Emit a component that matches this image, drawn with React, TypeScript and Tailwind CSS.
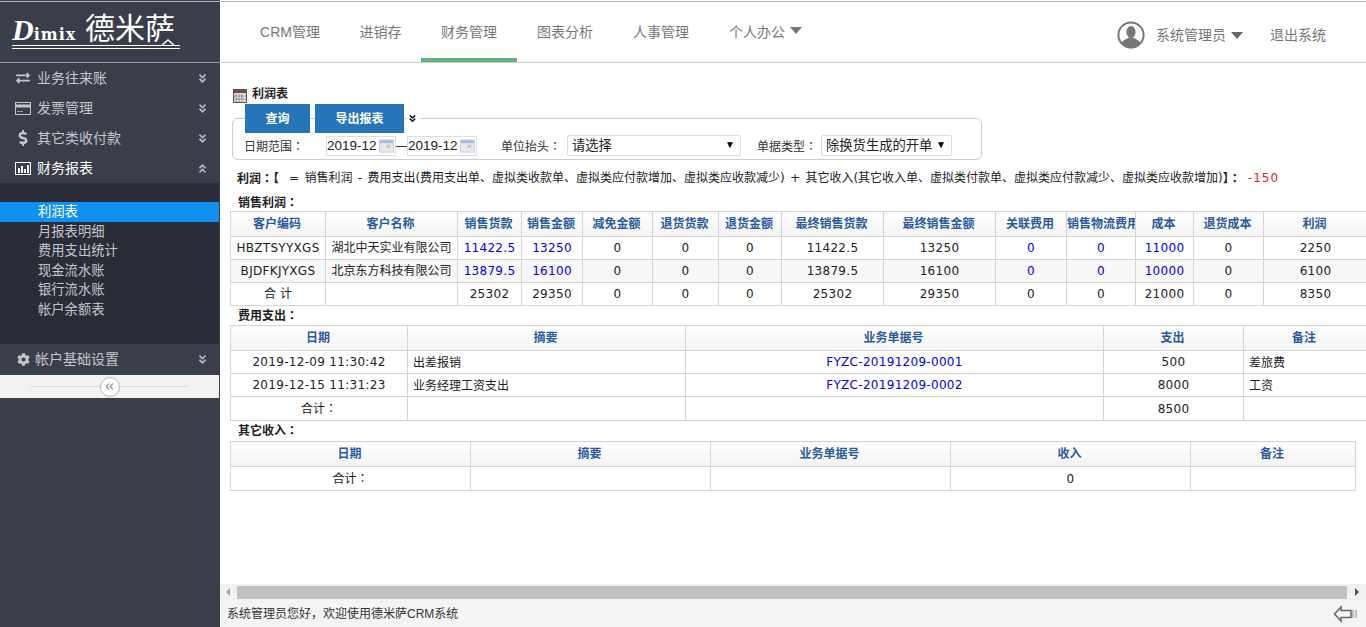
import { ChevronsDown, ChevronsLeft } from 'lucide-react';
import { FaAngleDoubleDown, FaAngleDoubleUp, FaCog, FaDollarSign, FaExchangeAlt } from 'react-icons/fa';

const font = 'font-["Liberation_Sans","Noto_Sans_CJK_SC",sans-serif]';
const dejavu = 'font-["DejaVu_Sans","Noto_Sans_CJK_SC",sans-serif]';

const tabs = [
  { label: 'CRM管理', w: 'w-[100px]' },
  { label: '进销存', w: 'w-[81px]' },
  { label: '财务管理', w: 'w-[96px]', active: true },
  { label: '图表分析', w: 'w-[96px]' },
  { label: '人事管理', w: 'w-[96px]' },
];

const subMenu = ['利润表', '月报表明细', '费用支出统计', '现金流水账', '银行流水账', '帐户余额表'];

// the reference centres its full-width colon in the cell, the SC face does not
function Colon() {
  return <span className="font-['Noto_Sans_CJK_TC',sans-serif]">：</span>;
}

function Chart() {
  return (
    <svg width="16" height="13" viewBox="0 0 16 13" className="shrink-0">
      <rect x="0.5" y="0.5" width="15" height="12" fill="none" stroke="#fff" />
      <rect x="3" y="6" width="2" height="5" fill="#fff" />
      <rect x="6" y="4" width="2" height="7" fill="#fff" />
      <rect x="9" y="7" width="2" height="4" fill="#fff" />
      <rect x="12" y="3" width="2" height="8" fill="#fff" />
    </svg>
  );
}

function Card() {
  return (
    <svg width="16" height="13" viewBox="0 0 16 13" className="shrink-0">
      <rect x="0.5" y="0.5" width="15" height="12" fill="none" stroke="#c4c6cc" />
      <rect x="1" y="2.500" width="14" height="3" fill="#c4c6cc" />
      <path d="M2.500 9.500h2M5.500 9.500h2" stroke="#c4c6cc" />
    </svg>
  );
}

function MenuItem({ icon, label, open, bright, gap, h }: { icon: React.ReactNode; label: string; open?: boolean; bright?: boolean; gap?: string; h?: string }) {
  return (
    <div className={`flex items-center pl-[15px] pr-[12px] text-[14px] ${h ?? 'h-[30px]'} ${bright ? 'text-white' : 'text-[#c4c6cc]'}`}>
      <span className="flex w-[16px] justify-center">{icon}</span>
      <span className={`${gap ?? 'ml-[6px]'} flex-1`}>{label}</span>
      {open ? <FaAngleDoubleUp size={11} className="text-[#b5b7bd]" /> : <FaAngleDoubleDown size={11} className="text-[#b5b7bd]" />}
    </div>
  );
}

function Sidebar() {
  return (
    <aside className="flex w-[220px] shrink-0 flex-col bg-[#3a3e4b]">
      <div className="h-[1px] bg-[#3a3e4b]" />
      <div className="h-[1px] bg-[#bbbbbb]" />
      <div className="h-[61px] border-b border-[#999999] pl-[12px] pt-[13px]">
        <div className="relative flex h-[34px] w-[168px] items-end border-b-[4px] border-double border-white text-white">
          <span className="flex w-[73px] items-baseline">
            <span className="font-['Liberation_Serif',serif] text-[30px] font-bold italic leading-[20px]">D</span>
            <span className="font-['DejaVu_Serif',serif] text-[16px] font-bold leading-[20px] tracking-[1px]">imix</span>
          </span>
          <span className="text-[30px] leading-[32px]">德米萨</span>
          <svg width="14" height="6" viewBox="0 0 14 6" className="absolute bottom-0 right-[5px]">
            <path d="M1 6l6-5 6 5" fill="none" stroke="#fff" strokeWidth="1.500" />
          </svg>
        </div>
      </div>
      <div>
        <MenuItem icon={<FaExchangeAlt size={14} />} label="业务往来账" />
        <MenuItem icon={<Card />} label="发票管理" />
        <MenuItem icon={<FaDollarSign size={16} />} label="其它类收付款" />
        <MenuItem icon={<Chart />} label="财务报表" open bright />
      </div>
      <div className="h-[161px] w-[219px] bg-[#2a2d38] pt-[19px]">
        {subMenu.map((s, i) => (
          <div key={s} className={`h-[19.6px] pl-[38px] text-[13.3px] leading-[19.6px] ${i === 0 ? 'bg-[#1090f0] text-white' : 'text-[#c4c6cc]'}`}>
            {s}
          </div>
        ))}
      </div>
      <MenuItem icon={<FaCog size={13} />} label="帐户基础设置" gap="ml-[4px]" h="h-[31px]" />
      <div className="flex h-[23px] w-[219px] items-center justify-center bg-[#f2f2f2] px-[30px]">
        <div className="h-px flex-1 bg-[#dddddd]" />
        <div className="flex h-[20px] w-[20px] items-center justify-center rounded-full border border-[#bbbbbb] bg-white text-[#888888]">
          <ChevronsLeft size={13} />
        </div>
        <div className="h-px flex-1 bg-[#dddddd]" />
      </div>
    </aside>
  );
}

function TopBar() {
  return (
    <header className="flex h-[62px] shrink-0 border-t border-b border-t-[#bbbbbb] border-b-[#cccccc] bg-white text-[14px] text-[#777777]">
      <nav className="ml-[20px] flex flex-1">
        {tabs.map((t) => (
          <div key={t.label} className={`flex h-[60px] items-start justify-center pt-[20px] ${t.w} ${t.active ? 'border-b-[4px] border-[#5cb578]' : ''}`}>
            {t.label}
          </div>
        ))}
        <div className="flex items-start pl-[20px] pt-[20px]">
          个人办公
          <span className="ml-[5px] mt-[5px] h-0 w-0 border-x-[6px] border-t-[7px] border-x-transparent border-t-[#777777]" />
        </div>
      </nav>
      <div className="mr-[40px] flex items-center pt-[6px]">
        <svg width="28" height="28" viewBox="0 0 28 28" className="mr-[11px]">
          <circle cx="14" cy="14" r="12.6" fill="#fff" stroke="#777" strokeWidth="2" />
          <ellipse cx="14" cy="11" rx="4.6" ry="6" fill="#777" />
          <path d="M4.500 22.500c1.500-4 6-4.500 7-6h5c1 1.500 5.500 2 7 6a12 12 0 0 1-19 0z" fill="#777" />
        </svg>
        <span>系统管理员</span>
        <span className="ml-[5px] mr-[27px] h-0 w-0 border-x-[6px] border-t-[7px] border-x-transparent border-t-[#666666]" />
        <span>退出系统</span>
      </div>
    </header>
  );
}

function DateBox({ value }: { value: string }) {
  return (
    <div className="flex h-[20px] w-[70px] items-center whitespace-nowrap border border-[#dddddd] text-[13.5px] leading-none text-[#222222]">
      {value}
      <svg width="15" height="14" viewBox="0 0 16 14" className="ml-[2px] shrink-0">
        <rect x="0.5" y="0.5" width="15" height="13" fill="#e3eaf3" stroke="#c3cedd" />
        <rect x="1" y="1" width="14" height="3" fill="#a9bcd6" />
        <rect x="8" y="6" width="4" height="3" fill="#e8b9a0" />
      </svg>
    </div>
  );
}

function Select({ value, w }: { value: string; w: string }) {
  return (
    <div className={`flex h-[21px] items-center justify-between rounded-[2px] border border-[#dddddd] pl-[4px] pr-[5px] text-[13.3px] text-[#222222] ${w}`}>
      <span className="pt-[1px]">{value}</span>
      <span className="mb-[3px] text-[10px] text-black">▼</span>
    </div>
  );
}

function Th({ children }: { children?: React.ReactNode }) {
  return <th className="overflow-hidden whitespace-nowrap border border-[#d4d4d4] bg-linear-to-b from-white to-[#f3f3f3] p-0 pr-[2px] text-center text-[12px] font-bold text-[#2a5a9c]">{children}</th>;
}

function Td({ children, blue, left }: { children?: React.ReactNode; blue?: boolean; left?: boolean }) {
  // latin values sit a bit wider than plain DejaVu in the reference
  const latin = typeof children === 'string' && /^[\x20-\x7e]+$/.test(children);
  return (
    <td className={`overflow-hidden whitespace-nowrap border border-[#d4d4d4] p-0 text-[12px] ${latin ? 'tracking-[0.3px]' : ''} ${left ? 'pl-[5px] pt-[2px] text-left' : 'text-center'} ${blue ? 'text-[#0000ee]' : 'text-[#222222]'}`}>
      {children}
    </td>
  );
}

const salesCols = ['w-[95px]', 'w-[132px]', 'w-[64px]', 'w-[61px]', 'w-[70px]', 'w-[66px]', 'w-[63px]', 'w-[102px]', 'w-[112px]', 'w-[71px]', 'w-[69px]', 'w-[58px]', 'w-[70px]', 'w-[104px]'];
const salesHead = ['客户编码', '客户名称', '销售货款', '销售金额', '减免金额', '退货货款', '退货金额', '最终销售货款', '最终销售金额', '关联费用', '销售物流费用', '成本', '退货成本', '利润'];
const salesRows = [
  ['HBZTSYYXGS', '湖北中天实业有限公司', '11422.5', '13250', '0', '0', '0', '11422.5', '13250', '0', '0', '11000', '0', '2250'],
  ['BJDFKJYXGS', '北京东方科技有限公司', '13879.5', '16100', '0', '0', '0', '13879.5', '16100', '0', '0', '10000', '0', '6100'],
];
const blueCols = [2, 3, 9, 10, 11];
const salesTotal = ['合 计', '', '25302', '29350', '0', '0', '0', '25302', '29350', '0', '0', '21000', '0', '8350'];

function SalesTable() {
  return (
    <table className="w-[1137px] table-fixed border-collapse">
      <colgroup>
        {salesCols.map((c, i) => (
          <col key={i} className={c} />
        ))}
      </colgroup>
      <thead>
        <tr className="h-[25px]">
          {salesHead.map((h) => (
            <Th key={h}>{h}</Th>
          ))}
        </tr>
      </thead>
      <tbody>
        {salesRows.map((r, ri) => (
          <tr key={r[0]} className={`h-[23px] ${ri === 1 ? 'bg-[#f7f7f7]' : ''}`}>
            {r.map((v, i) => (
              <Td key={i} blue={blueCols.includes(i)}>
                {v}
              </Td>
            ))}
          </tr>
        ))}
        <tr className="h-[23px]">
          {salesTotal.map((v, i) => (
            <Td key={i}>{v}</Td>
          ))}
        </tr>
      </tbody>
    </table>
  );
}

function ExpenseTable() {
  return (
    <table className="w-[1136px] table-fixed border-collapse">
      <colgroup>
        <col className="w-[177px]" />
        <col className="w-[278px]" />
        <col className="w-[418px]" />
        <col className="w-[140px]" />
        <col className="w-[123px]" />
      </colgroup>
      <thead>
        <tr className="h-[25px]">
          <Th>日期</Th>
          <Th>摘要</Th>
          <Th>业务单据号</Th>
          <Th>支出</Th>
          <Th>备注</Th>
        </tr>
      </thead>
      <tbody>
        <tr className="h-[23px]">
          <Td>2019-12-09 11:30:42</Td>
          <Td left>出差报销</Td>
          <Td blue>FYZC-20191209-0001</Td>
          <Td>500</Td>
          <Td left>差旅费</Td>
        </tr>
        <tr className="h-[23px]">
          <Td>2019-12-15 11:31:23</Td>
          <Td left>业务经理工资支出</Td>
          <Td blue>FYZC-20191209-0002</Td>
          <Td>8000</Td>
          <Td left>工资</Td>
        </tr>
        <tr className="h-[24px]">
          <Td>
            合计
            <Colon />
          </Td>
          <Td />
          <Td />
          <Td>8500</Td>
          <Td />
        </tr>
      </tbody>
    </table>
  );
}

function IncomeTable() {
  return (
    <table className="w-[1125px] table-fixed border-collapse">
      <colgroup>
        <col className="w-[240px]" />
        <col className="w-[240px]" />
        <col className="w-[240px]" />
        <col className="w-[240px]" />
        <col className="w-[165px]" />
      </colgroup>
      <thead>
        <tr className="h-[25px]">
          <Th>日期</Th>
          <Th>摘要</Th>
          <Th>业务单据号</Th>
          <Th>收入</Th>
          <Th>备注</Th>
        </tr>
      </thead>
      <tbody>
        <tr className="h-[24px]">
          <Td>
            合计
            <Colon />
          </Td>
          <Td />
          <Td />
          <Td>0</Td>
          <Td />
        </tr>
      </tbody>
    </table>
  );
}

function SectionTitle({ children, h }: { children: React.ReactNode; h: string }) {
  return (
    <div className={`pl-[8px] text-[12px] font-bold text-[#222222] ${h}`}>
      {children}
      <Colon />
    </div>
  );
}

export default function App() {
  return (
    <div className={`flex h-[627px] w-[1366px] overflow-hidden bg-white ${font}`}>
      <Sidebar />
      <main className="flex min-w-0 flex-1 flex-col">
        <div className="h-[1px] shrink-0 bg-white" />
        <TopBar />
        <div className="h-[521px] overflow-hidden pl-[10px]">
          <div className="flex h-[43px] items-end pb-[3px] pl-[3px] text-[12px] font-bold text-[#222222]">
            <svg width="14" height="14" viewBox="0 0 14 14" className="mr-[5px]">
              <rect x="0.5" y="0.5" width="13" height="13" fill="#ddd" stroke="#555" />
              <rect x="1" y="1" width="12" height="3" fill="#7a4a4a" />
              <path d="M3 5.500v7M6 5.500v7M9 5.500v7M1.500 7h11M1.500 10h11" stroke="#666" strokeDasharray="1 1" />
            </svg>
            利润表
          </div>
          {/* filter box */}
          <div className="ml-[2px] mt-[12px] h-[42px] w-[750px] rounded-[6px] border border-[#cccccc] bg-white">
            <div className="-mt-[15px] flex h-[29px] items-start pl-[12px]">
              <div className="flex h-[29px] w-[65px] items-center justify-center bg-[#2775b9] text-[12px] font-bold text-white">查询</div>
              <div className="ml-[5px] flex h-[29px] w-[89px] items-center justify-center bg-[#2775b9] text-[12px] font-bold text-white">导出报表</div>
              <div className="ml-[3px] bg-white pr-[2px] pt-[9px]">
                <ChevronsDown size={11} strokeWidth={3} className="text-black" />
              </div>
            </div>
            <div className="flex items-center pl-[11px] pt-[2px] text-[12px] text-[#333333]">
              <span className="w-[82px] pt-[1px]">日期范围<Colon /></span>
              <DateBox value="2019-12" />
              <span className="w-[11px] text-center text-[12px]">—</span>
              <DateBox value="2019-12" />
              <span className="ml-[24px] w-[66px] pt-[1px]">单位抬头<Colon /></span>
              <Select value="请选择" w="w-[174px]" />
              <span className="ml-[16px] w-[64px] pt-[1px]">单据类型<Colon /></span>
              <Select value="除换货生成的开单" w="w-[131px]" />
            </div>
          </div>
          <div className={`flex h-[33px] items-center whitespace-nowrap pl-[7px] pt-[3px] text-[12px] text-[#222222] ${dejavu}`}>
            <span className="font-bold">利润<Colon />【</span>
            <span className="ml-[10px] [word-spacing:1.5px]">= 销售利润 - 费用支出(费用支出单、虚拟类收款单、虚拟类应付款增加、虚拟类应收款减少) + 其它收入(其它收入单、虚拟类付款单、虚拟类应付款减少、虚拟类应收款增加)</span>
            <span className="font-bold">】<Colon /></span>
            <span className="ml-[7px] tracking-[1px] text-[#e0202a]">-150</span>
          </div>
          <div className={dejavu}>
            <SectionTitle h="h-[18px]">销售利润</SectionTitle>
            <SalesTable />
            <SectionTitle h="h-[19px]">费用支出</SectionTitle>
            <ExpenseTable />
            <SectionTitle h="h-[20px]">其它收入</SectionTitle>
            <IncomeTable />
          </div>
        </div>
        <div className="flex h-[16px] shrink-0 items-center bg-[#f1f1f1]">
          <span className="ml-[6px] mr-[7px] h-0 w-0 border-y-[4px] border-r-[4px] border-y-transparent border-r-[#a3a3a3]" />
          <div className="h-[13px] w-[1110px] bg-[#c1c1c1]" />
          <span className="ml-[8px] h-0 w-0 border-y-[4px] border-l-[4px] border-y-transparent border-l-[#505050]" />
        </div>
        <footer className="flex h-[27px] shrink-0 items-center justify-between bg-[#f4f4f4] pl-[7px] pr-[9px] pt-[1px] text-[12px] text-[#333333]">
          系统管理员您好，欢迎使用德米萨CRM系统
          <svg width="24" height="20" viewBox="0 0 24 20">
            <path d="M1.500 10 8 3v3.500h10v7H8V17z" fill="none" stroke="#666" strokeWidth="1.500" />
            <path d="M20 6v8M23 6v8" stroke="#888" strokeWidth="1" />
          </svg>
        </footer>
      </main>
    </div>
  );
}
